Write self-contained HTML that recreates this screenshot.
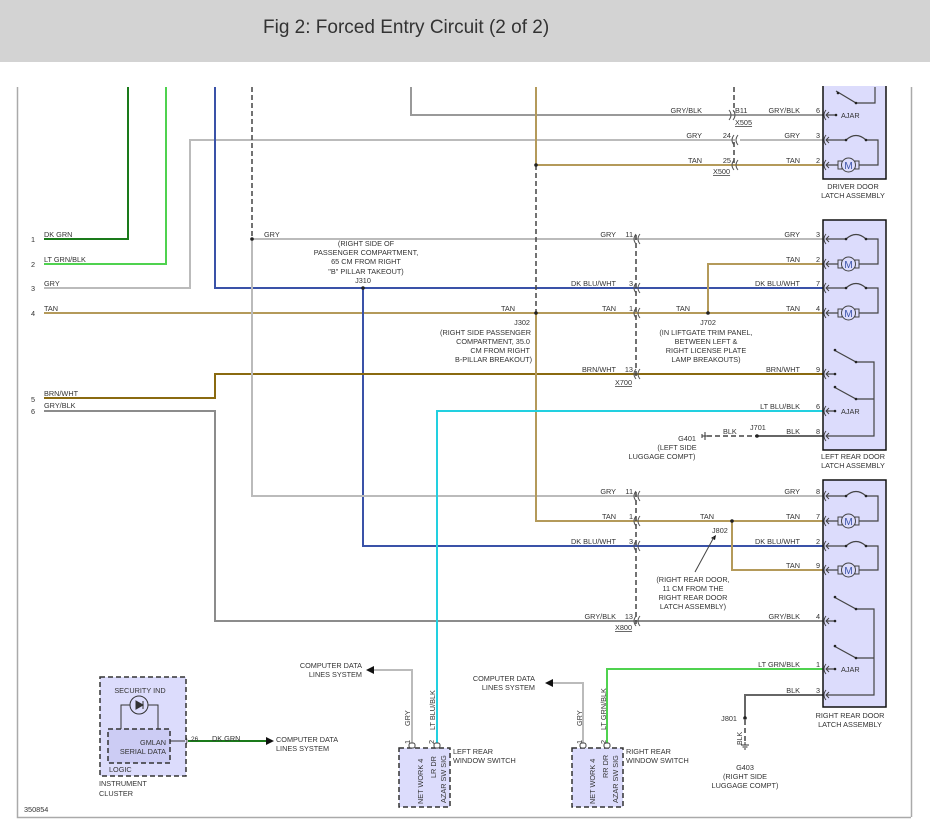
<!DOCTYPE html>
<html><head><meta charset="utf-8"><style>
body{margin:0;width:930px;height:835px;background:#fff;overflow:hidden}
svg{display:block}
text{font-family:"Liberation Sans",sans-serif;font-size:7.3px;fill:#333}
.r{text-anchor:end}.m{text-anchor:middle}
</style></head><body>
<svg width="930" height="835" viewBox="0 0 930 835" xmlns="http://www.w3.org/2000/svg">
<rect x="0" y="0" width="930" height="62" fill="#d3d3d3"/>
<text x="263" y="33" style="font-size:19px;fill:#333">Fig 2: Forced Entry Circuit (2 of 2)</text>
<!-- frame -->
<path d="M17.5,87 V817.5 H911 M911.5,87 V817" stroke="#aaa" stroke-width="1.5" fill="none"/>
<g fill="none" stroke-width="2">
<!-- left-side wires -->
<path d="M44,239 H128 V87" stroke="#1a7a1a"/>
<path d="M44,264 H166 V87" stroke="#4fd24f"/>
<path d="M44,288 H190 V140 H735 M740,140 H823" stroke="#bbb"/>
<path d="M44,313 H823" stroke="#b49a5a"/>
<path d="M215,87 V288 H823" stroke="#3a52a8"/>
<path d="M363,288 V546 H823" stroke="#3a52a8"/>
<path d="M44,398 H215 V374 H823" stroke="#8a6a10"/>
<path d="M44,411 H215 V621 H823" stroke="#8c8c8c"/>
<path d="M252,239 V496 H823 M252,239 H823" stroke="#bbb"/>
<path d="M411,87 V115 H823" stroke="#999"/>
<path d="M536,87 V165 H823 M536,313 V521 H823" stroke="#b49a5a"/>
<path d="M708,313 V264 H823" stroke="#b49a5a"/>
<path d="M732,521 V570 H823" stroke="#b49a5a"/>
<path d="M437,747 V411 H823" stroke="#22d0e0"/>
<path d="M607,747 V669 H823" stroke="#4fd24f"/>
<path d="M745,718 V695 H823" stroke="#666"/>
<path d="M757,436 H823" stroke="#666"/>
<path d="M412,747 V670 H373" stroke="#bbb"/>
<path d="M583,747 V683 H552" stroke="#bbb"/>
<path d="M188,741 H266" stroke="#1a7a1a"/>
</g>
<!-- dashed lines -->
<g stroke="#444" stroke-width="1.5" fill="none" stroke-dasharray="5,3">
<path d="M252,87 V239"/><path d="M536,165 V313"/>
<path d="M636,235 V378"/><path d="M636,492 V624"/>
<path d="M734,87 V112"/><path d="M734,142 V163"/>
<path d="M707,436 H757"/><path d="M745,720 V742"/>
</g>
<!-- junction dots -->
<g fill="#222">
<circle cx="252" cy="239" r="1.8"/><circle cx="363" cy="288" r="1.8"/><circle cx="536" cy="165" r="1.8"/>
<circle cx="536" cy="313" r="1.8"/><circle cx="708" cy="313" r="1.8"/><circle cx="732" cy="521" r="1.8"/>
<circle cx="757" cy="436" r="1.8"/><circle cx="745" cy="718" r="1.8"/>
</g>
<!-- arrows -->
<g fill="#111">
<path d="M366,670 L374,666 V674Z"/><path d="M545,683 L553,679 V687Z"/><path d="M274,741 L266,737 V745Z"/>
<path d="M716,535 l-5,3 l4,2Z"/>
</g>
<path d="M695,572 L714,537" stroke="#444" stroke-width="1"/>
<!-- inline connectors (( -->
<g stroke="#555" stroke-width="1" fill="none">
<path d="M636,234 q-4,5 0,10 M640,234 q-4,5 0,10 M636,283 q-4,5 0,10 M640,283 q-4,5 0,10 M636,308 q-4,5 0,10 M640,308 q-4,5 0,10 M636,369 q-4,5 0,10 M640,369 q-4,5 0,10"/>
<path d="M636,491 q-4,5 0,10 M640,491 q-4,5 0,10 M636,516 q-4,5 0,10 M640,516 q-4,5 0,10 M636,541 q-4,5 0,10 M640,541 q-4,5 0,10 M636,616 q-4,5 0,10 M640,616 q-4,5 0,10"/>
<path d="M734,135 q-4,5 0,10 M738,135 q-4,5 0,10 M734,160 q-4,5 0,10 M738,160 q-4,5 0,10"/>
<path d="M729,110 q4,5 0,10 M733,110 q4,5 0,10"/>
<path d="M185,736 q4,5 0,10"/>
</g>
<!-- latch boxes -->
<g stroke="#111" stroke-width="1.5" fill="#dcdcfc">
<rect x="823" y="80" width="63" height="99"/>
<rect x="823" y="220" width="63" height="230"/>
<rect x="823" y="480" width="63" height="227"/>
</g>
<rect x="810" y="62" width="90" height="24" fill="#fff"/>
<!-- latch pin connectors -->
<g stroke="#444" stroke-width="1" fill="none">
<path d="M826,110 q-4,5 0,10 M826,135 q-4,5 0,10 M826,160 q-4,5 0,10
M826,234 q-4,5 0,10 M826,259 q-4,5 0,10 M826,283 q-4,5 0,10 M826,308 q-4,5 0,10 M826,369 q-4,5 0,10 M826,406 q-4,5 0,10 M826,431 q-4,5 0,10
M826,491 q-4,5 0,10 M826,516 q-4,5 0,10 M826,541 q-4,5 0,10 M826,565 q-4,5 0,10 M826,616 q-4,5 0,10 M826,664 q-4,5 0,10 M826,690 q-4,5 0,10"/>
<path d="M829,112 l-3,3 l3,3 M829,137 l-3,3 l3,3 M829,162 l-3,3 l3,3 M829,236 l-3,3 l3,3 M829,261 l-3,3 l3,3 M829,285 l-3,3 l3,3 M829,310 l-3,3 l3,3 M829,371 l-3,3 l3,3 M829,408 l-3,3 l3,3 M829,433 l-3,3 l3,3 M829,493 l-3,3 l3,3 M829,518 l-3,3 l3,3 M829,543 l-3,3 l3,3 M829,567 l-3,3 l3,3 M829,618 l-3,3 l3,3 M829,666 l-3,3 l3,3 M829,692 l-3,3 l3,3"/>
</g>
<!-- latch internals -->
<g stroke="#444" stroke-width="1.2" fill="none">
<!-- driver -->
<path d="M836,91 L856,103 H875 V87"/>
<path d="M826,115 H836 M826,140 H846 q10,-9 20,0 H878 V165 H859 M826,165 H838 M855,165 H859"/>
<!-- left rear -->
<path d="M826,239 H846 q10,-9 20,0 H878 V264 H859 M826,264 H838"/>
<path d="M826,288 H846 q10,-9 20,0 H878 V313 H859 M826,313 H838"/>
<path d="M834,350 L856,362 H874 V436 H826 M834,387 L856,399 H874 M826,374 H835 M826,411 H835"/>
<!-- right rear -->
<path d="M826,496 H846 q10,-9 20,0 H878 V521 H859 M826,521 H838"/>
<path d="M826,546 H846 q10,-9 20,0 H878 V570 H859 M826,570 H838"/>
<path d="M834,597 L856,609 H874 V695 H826 M834,646 L856,658 H874 M826,621 H835 M826,669 H835"/>
</g>
<g fill="#222"><circle cx="836" cy="115" r="1.3"/><circle cx="846" cy="140" r="1.3"/><circle cx="866" cy="140" r="1.3"/><circle cx="838" cy="93" r="1.3"/><circle cx="856" cy="103" r="1.3"/>
<circle cx="846" cy="239" r="1.3"/><circle cx="866" cy="239" r="1.3"/><circle cx="846" cy="288" r="1.3"/><circle cx="866" cy="288" r="1.3"/>
<circle cx="835" cy="374" r="1.3"/><circle cx="835" cy="411" r="1.3"/><circle cx="835" cy="350" r="1.3"/><circle cx="856" cy="362" r="1.3"/><circle cx="835" cy="387" r="1.3"/><circle cx="856" cy="399" r="1.3"/>
<circle cx="846" cy="496" r="1.3"/><circle cx="866" cy="496" r="1.3"/><circle cx="846" cy="546" r="1.3"/><circle cx="866" cy="546" r="1.3"/>
<circle cx="835" cy="621" r="1.3"/><circle cx="835" cy="669" r="1.3"/><circle cx="835" cy="597" r="1.3"/><circle cx="856" cy="609" r="1.3"/><circle cx="835" cy="646" r="1.3"/><circle cx="856" cy="658" r="1.3"/></g>
<!-- motors -->
<g stroke="#444" stroke-width="1" fill="#dcdcfc">
<g transform="translate(0,165)"><rect x="838" y="-4" width="4" height="8"/><rect x="855" y="-4" width="4" height="8"/><circle cx="848.5" cy="0" r="7"/></g>
<g transform="translate(0,264)"><rect x="838" y="-4" width="4" height="8"/><rect x="855" y="-4" width="4" height="8"/><circle cx="848.5" cy="0" r="7"/></g>
<g transform="translate(0,313)"><rect x="838" y="-4" width="4" height="8"/><rect x="855" y="-4" width="4" height="8"/><circle cx="848.5" cy="0" r="7"/></g>
<g transform="translate(0,521)"><rect x="838" y="-4" width="4" height="8"/><rect x="855" y="-4" width="4" height="8"/><circle cx="848.5" cy="0" r="7"/></g>
<g transform="translate(0,570)"><rect x="838" y="-4" width="4" height="8"/><rect x="855" y="-4" width="4" height="8"/><circle cx="848.5" cy="0" r="7"/></g>
</g>
<g class="m" style="font-size:10px"><text class="m" x="848.5" y="169" style="font-size:10px;fill:#3a52a8">M</text><text class="m" x="848.5" y="268" style="font-size:10px;fill:#3a52a8">M</text><text class="m" x="848.5" y="317" style="font-size:10px;fill:#3a52a8">M</text><text class="m" x="848.5" y="525" style="font-size:10px;fill:#3a52a8">M</text><text class="m" x="848.5" y="574" style="font-size:10px;fill:#3a52a8">M</text></g>
<text x="841" y="118">AJAR</text><text x="841" y="414">AJAR</text><text x="841" y="672">AJAR</text>
<text class="m" x="853" y="189">DRIVER DOOR</text><text class="m" x="853" y="198">LATCH ASSEMBLY</text>
<text class="m" x="853" y="459">LEFT REAR DOOR</text><text class="m" x="853" y="468">LATCH ASSEMBLY</text>
<text class="m" x="850" y="718">RIGHT REAR DOOR</text><text class="m" x="850" y="727">LATCH ASSEMBLY</text>
<!-- pin numbers near latches -->
<g class="r">
<text class="r" x="820" y="113">6</text><text class="r" x="800" y="113">GRY/BLK</text>
<text class="r" x="820" y="138">3</text><text class="r" x="800" y="138">GRY</text>
<text class="r" x="820" y="163">2</text><text class="r" x="800" y="163">TAN</text>
<text class="r" x="820" y="237">3</text><text class="r" x="800" y="237">GRY</text>
<text class="r" x="820" y="262">2</text><text class="r" x="800" y="262">TAN</text>
<text class="r" x="820" y="286">7</text><text class="r" x="800" y="286">DK BLU/WHT</text>
<text class="r" x="820" y="311">4</text><text class="r" x="800" y="311">TAN</text>
<text class="r" x="820" y="372">9</text><text class="r" x="800" y="372">BRN/WHT</text>
<text class="r" x="820" y="409">6</text><text class="r" x="800" y="409">LT BLU/BLK</text>
<text class="r" x="820" y="434">8</text><text class="r" x="800" y="434">BLK</text>
<text class="r" x="820" y="494">8</text><text class="r" x="800" y="494">GRY</text>
<text class="r" x="820" y="519">7</text><text class="r" x="800" y="519">TAN</text>
<text class="r" x="820" y="544">2</text><text class="r" x="800" y="544">DK BLU/WHT</text>
<text class="r" x="820" y="568">9</text><text class="r" x="800" y="568">TAN</text>
<text class="r" x="820" y="619">4</text><text class="r" x="800" y="619">GRY/BLK</text>
<text class="r" x="820" y="667">1</text><text class="r" x="800" y="667">LT GRN/BLK</text>
<text class="r" x="820" y="693">3</text><text class="r" x="800" y="693">BLK</text>
<!-- X connectors -->
<text class="r" x="702" y="113">GRY/BLK</text>
<text class="r" x="731" y="138">24</text><text class="r" x="702" y="138">GRY</text>
<text class="r" x="731" y="163">25</text><text class="r" x="702" y="163">TAN</text>
<text class="r" x="633" y="237">11</text><text class="r" x="616" y="237">GRY</text>
<text class="r" x="633" y="286">3</text><text class="r" x="616" y="286">DK BLU/WHT</text>
<text class="r" x="633" y="311">1</text><text class="r" x="616" y="311">TAN</text>
<text class="r" x="633" y="372">13</text><text class="r" x="616" y="372">BRN/WHT</text>
<text class="r" x="633" y="494">11</text><text class="r" x="616" y="494">GRY</text>
<text class="r" x="633" y="519">1</text><text class="r" x="616" y="519">TAN</text>
<text class="r" x="633" y="544">3</text><text class="r" x="616" y="544">DK BLU/WHT</text>
<text class="r" x="633" y="619">13</text><text class="r" x="616" y="619">GRY/BLK</text>
<text class="r" x="515" y="311">TAN</text>
</g>
<text x="735" y="113">B11</text>
<text x="735" y="125" text-decoration="underline">X505</text>
<text x="713" y="174" text-decoration="underline">X500</text>
<text x="615" y="385" text-decoration="underline">X700</text>
<text x="615" y="630" text-decoration="underline">X800</text>
<text x="676" y="311">TAN</text><text x="700" y="519">TAN</text>
<text x="264" y="237">GRY</text>
<!-- left labels -->
<text x="31" y="242">1</text><text x="44" y="237">DK GRN</text>
<text x="31" y="267">2</text><text x="44" y="262">LT GRN/BLK</text>
<text x="31" y="291">3</text><text x="44" y="286">GRY</text>
<text x="31" y="316">4</text><text x="44" y="311">TAN</text>
<text x="31" y="402">5</text><text x="44" y="396">BRN/WHT</text>
<text x="31" y="414">6</text><text x="44" y="408">GRY/BLK</text>
<!-- notes -->
<g>
<text class="m" x="366" y="246">(RIGHT SIDE OF</text><text class="m" x="366" y="255">PASSENGER COMPARTMENT,</text><text class="m" x="366" y="264">65 CM FROM RIGHT</text><text class="m" x="366" y="274">"B" PILLAR TAKEOUT)</text><text class="m" x="363" y="283">J310</text>
<text class="r" x="530" y="325">J302</text><text class="r" x="531" y="335">(RIGHT SIDE PASSENGER</text><text class="r" x="530" y="344">COMPARTMENT, 35.0</text><text class="r" x="530" y="353">CM FROM RIGHT</text><text class="r" x="532" y="362">B-PILLAR BREAKOUT)</text>
<text class="m" x="708" y="325">J702</text><text class="m" x="706" y="335">(IN LIFTGATE TRIM PANEL,</text><text class="m" x="706" y="344">BETWEEN LEFT &amp;</text><text class="m" x="706" y="353">RIGHT LICENSE PLATE</text><text class="m" x="706" y="362">LAMP BREAKOUTS)</text>
<text x="750" y="430">J701</text><text x="723" y="434">BLK</text>
<text class="r" x="696" y="441">G401</text><text class="m" x="677" y="450">(LEFT SIDE</text><text class="m" x="662" y="459">LUGGAGE COMPT)</text>
<text x="712" y="533">J802</text>
<text class="m" x="693" y="582">(RIGHT REAR DOOR,</text><text class="m" x="693" y="591">11 CM FROM THE</text><text class="m" x="693" y="600">RIGHT REAR DOOR</text><text class="m" x="693" y="609">LATCH ASSEMBLY)</text>
<text class="r" x="362" y="668">COMPUTER DATA</text><text class="r" x="362" y="677">LINES SYSTEM</text>
<text class="r" x="535" y="681">COMPUTER DATA</text><text class="r" x="535" y="690">LINES SYSTEM</text>
<text x="276" y="742">COMPUTER DATA</text><text x="276" y="751">LINES SYSTEM</text>
<text x="191" y="741" style="font-size:6.5px">26</text><text x="212" y="741">DK GRN</text>
<text class="r" x="737" y="721">J801</text>
<text class="m" x="745" y="770">G403</text><text class="m" x="745" y="779">(RIGHT SIDE</text><text class="m" x="745" y="788">LUGGAGE COMPT)</text>
<text x="24" y="812">350854</text>
</g>
<!-- G401 ground -->
<path d="M705,432 V440 M702,434 V438 M707,436 H702" stroke="#333" stroke-width="1"/>
<!-- G403 ground -->
<path d="M741,745 H749 M742.5,747 H747.5 M744,749 H746 M745,742 V745" stroke="#333" stroke-width="1"/>
<text transform="translate(742,745) rotate(-90)" style="font-size:7px">BLK</text>
<!-- instrument cluster -->
<rect x="100" y="677" width="86" height="99" fill="#dcdcfc" stroke="#333" stroke-width="1.5" stroke-dasharray="5,3"/>
<rect x="108" y="729" width="62" height="34" fill="#ccccf4" stroke="#333" stroke-width="1.5" stroke-dasharray="5,3"/>
<path d="M121,729 V705 H158 V729 M170,741 H185" stroke="#333" stroke-width="1" fill="none"/>
<circle cx="139" cy="705" r="9" fill="#dcdcfc" stroke="#333" stroke-width="1"/>
<path d="M136,701 L143,705 L136,709Z M143,701 V709" fill="#333" stroke="#333" stroke-width="1"/>
<text class="m" x="140" y="693">SECURITY IND</text>
<text class="r" x="166" y="745">GMLAN</text><text class="r" x="166" y="754">SERIAL DATA</text>
<text x="109" y="772">LOGIC</text>
<text x="99" y="786">INSTRUMENT</text><text x="99" y="796">CLUSTER</text>
<!-- window switches -->
<rect x="399" y="748" width="51" height="59" fill="#dcdcfc" stroke="#333" stroke-width="1.5" stroke-dasharray="5,3"/>
<rect x="572" y="748" width="51" height="59" fill="#dcdcfc" stroke="#333" stroke-width="1.5" stroke-dasharray="5,3"/>
<g stroke="#444" stroke-width="1" fill="#fff">
<rect x="409" y="743" width="6" height="5" rx="2"/><rect x="434" y="743" width="6" height="5" rx="2"/>
<rect x="580" y="743" width="6" height="5" rx="2"/><rect x="604" y="743" width="6" height="5" rx="2"/>
</g>
<g style="font-size:7px">
<text transform="translate(423,804) rotate(-90)">NET WORK 4</text>
<text transform="translate(436,778) rotate(-90)">LR DR</text>
<text transform="translate(446,803) rotate(-90)">AZAR SW SIG</text>
<text transform="translate(410,726) rotate(-90)">GRY</text>
<text transform="translate(435,730) rotate(-90)">LT BLU/BLK</text>
<text transform="translate(410,744) rotate(-90)">1</text><text transform="translate(434,744) rotate(-90)">2</text>
<text transform="translate(595,804) rotate(-90)">NET WORK 4</text>
<text transform="translate(608,778) rotate(-90)">RR DR</text>
<text transform="translate(618,803) rotate(-90)">AZAR SW SIG</text>
<text transform="translate(582,726) rotate(-90)">GRY</text>
<text transform="translate(606,730) rotate(-90)">LT GRN/BLK</text>
<text transform="translate(582,744) rotate(-90)">1</text><text transform="translate(606,744) rotate(-90)">2</text>
</g>
<text x="453" y="754">LEFT REAR</text><text x="453" y="763">WINDOW SWITCH</text>
<text x="626" y="754">RIGHT REAR</text><text x="626" y="763">WINDOW SWITCH</text>
</svg>
</body></html>
